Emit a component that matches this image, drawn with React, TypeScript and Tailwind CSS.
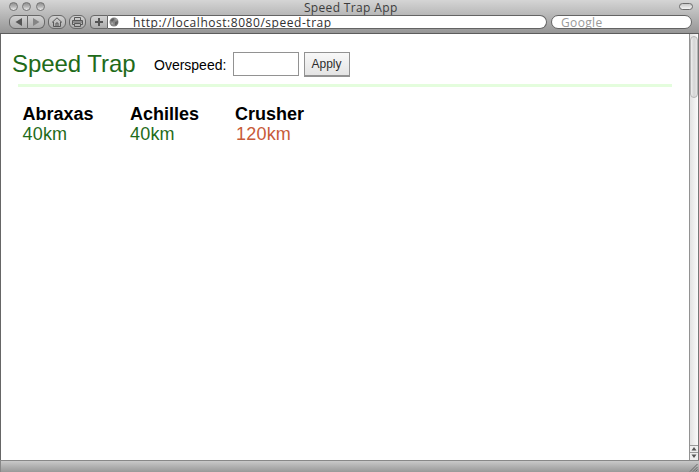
import type { ReactNode } from "react";

const horses = [
  { name: "Abraxas", speed: 40, width: "w-[107.5px]", nudge: "" },
  { name: "Achilles", speed: 40, width: "w-[105px]", nudge: "" },
  { name: "Crusher", speed: 120, width: "w-[90px]", nudge: "pl-px" },
];

function ToolButton({ className, children }: { className: string; children: ReactNode }) {
  return (
    <div
      className={`flex h-[14px] items-center justify-center border border-[#686868] bg-gradient-to-b from-[#d2d2d2] to-[#acacac] ${className}`}
    >
      {children}
    </div>
  );
}

function TrafficLight() {
  return (
    <div className="size-[9px] rounded-full border border-[#737373] bg-gradient-to-b from-[#909090] via-[#b4b4b4] to-[#eeeeee]" />
  );
}

function TitleBar() {
  return (
    <header className="flex h-[34px] flex-col border-b border-[#5c5c5c] bg-gradient-to-b from-[#d5d5d5] to-[#969696] font-['Open_Sans',sans-serif]">
      <div className="flex h-[15px] items-start pr-[6px] pl-[8.5px]">
        <div className="flex w-[80px] gap-[4.5px] pt-[2px]">
          <TrafficLight />
          <TrafficLight />
          <TrafficLight />
        </div>
        <div className="flex-1 text-center text-[12px] leading-[15px] tracking-[0.35px] text-[#3c3c3c]">Speed Trap App</div>
        <div className="flex w-[80px] justify-end pt-[3px]">
          <div className="h-[7px] w-[14px] rounded-full border border-[#6c6c6c] bg-gradient-to-b from-[#c8c8c8] to-[#f4f4f4]" />
        </div>
      </div>
      <div className="flex h-[14px] items-start pl-[9px]">
        <ToolButton className="w-[19px] rounded-l-[6px]">
          <svg width="17" height="12" viewBox="0 0 17 12"><path d="M12 2v8L5.5 6z" fill="#555" /></svg>
        </ToolButton>
        <ToolButton className="w-[17px] rounded-r-[6px] border-l-0">
          <svg width="16" height="12" viewBox="0 0 16 12"><path d="M5 2v8l6.5-4z" fill="#858585" /></svg>
        </ToolButton>
        <ToolButton className="ml-[3px] w-[18px] rounded-[6px]">
          <svg width="16" height="12" viewBox="0 0 16 12" fill="none" stroke="#585858">
            <path d="M3 6.5 8 1.8l5 4.7M4.5 5.8v4.7h7V5.8M7 10.5V7h2v3.5" />
          </svg>
        </ToolButton>
        <ToolButton className="ml-[3px] w-[17px] rounded-[6px]">
          <svg width="15" height="12" viewBox="0 0 15 12" fill="none" stroke="#585858">
            <path d="M4.5 4V1.5h6V4M4.5 8.5h-2v-4h10v4h-2M4.5 7.5h6v3h-6z" />
            <path d="M3 6h9" />
          </svg>
        </ToolButton>
        <ToolButton className="ml-1 w-[18px] rounded-l-[4px]">
          <svg width="16" height="12" viewBox="0 0 16 12"><path d="M7 2h2v3h3v2H9v3H7V7H4V5h3z" fill="#555" /></svg>
        </ToolButton>
        <div className="flex h-[14px] w-[439px] items-start overflow-hidden rounded-r-[7px] border border-l-0 border-[#646464] bg-white pl-[1px]">
          <svg className="mt-px" width="10" height="10" viewBox="0 0 10 10">
            <circle cx="5" cy="5" r="4.5" fill="#858585" />
            <path d="M2 2.5 4.5 1 5 3 3.5 4.5 1.5 4zM6 5l3-1-.5 3L6 8.5z" fill="#606060" />
            <path d="M1.5 6 4 5.5 4.5 8zM6.5 1.5l2 1.5-2 .5z" fill="#aaa" />
          </svg>
          <span className="ml-[14px] text-[12px] leading-[14px] tracking-[0.54px] whitespace-nowrap text-[#303030]">
            http://localhost:8080/speed-trap
          </span>
        </div>
        <div className="ml-[4px] h-[14px] w-[141px] overflow-hidden rounded-full border border-[#646464] bg-white pl-[9px] text-[12px] leading-[14px] tracking-[0.35px] text-[#999]">
          Google
        </div>
      </div>
    </header>
  );
}

function ScrollBar() {
  return (
    <div className="flex w-[10px] flex-col items-stretch border-r border-l border-r-[#777] border-l-[#929292] bg-gradient-to-r from-[#e2e2e2] to-[#fafafa] pt-[2px]">
      <div className="h-[62px] rounded-full border border-[#b4b4b4] bg-gradient-to-r from-[#eeeeee] via-[#d4d4d4] to-[#e6e6e6]" />
      <div className="flex-1" />
      <svg width="8" height="15" viewBox="0 0 8 15">
        <path d="M0 0h8v15H0z" fill="#eee" />
        <path d="M0 .5h8M0 7.5h8" stroke="#999" />
        <path d="M1.5 5.5h5L4 2zM1.5 9.5h5L4 13z" fill="#555" />
      </svg>
    </div>
  );
}

export default function App() {
  return (
    <div className="flex h-[472px] w-[699px] flex-col overflow-hidden bg-white font-['Liberation_Sans',sans-serif]">
      <TitleBar />
      <div className="flex min-h-0 flex-1 border-l border-[#666]">
        <main className="min-w-0 flex-1">
          <div className="flex h-[50px] items-start pl-[11px]">
            <h1 className="w-[142px] pt-[16px] text-[24px] leading-[28px] tracking-[-0.05px] whitespace-nowrap text-[#1f6b1a]">Speed Trap</h1>
            <label className="w-[79px] pt-[23px] text-[14px] leading-4 whitespace-nowrap text-black" htmlFor="overspeed">
              Overspeed:
            </label>
            <input id="overspeed" className="mt-[18px] h-6 w-[66px] border border-[#929292] bg-white" />
            <button className="mt-[18px] ml-[5px] h-[25px] w-[46px] border border-b-2 border-[#929292] bg-gradient-to-b from-[#f8f8f8] to-[#e4e4e4] pr-px text-[12px] leading-[22px] text-[#2c2c2c]">
              Apply
            </button>
          </div>
          <div className="mr-[17px] ml-[17px] h-[3px] bg-[#e4fddd]" />
          <div className="flex pt-[17px] pl-[21.5px] text-[18px] leading-5">
            {horses.map((horse) => (
              <div key={horse.name} className={horse.width}>
                <div className="font-bold text-black">{horse.name}</div>
                <div className={`tracking-[0.2px] ${horse.nudge} ${horse.speed > 100 ? "text-[#c75b39]" : "text-[#1f6b1a]"}`}>
                  {horse.speed}km
                </div>
              </div>
            ))}
          </div>
        </main>
        <ScrollBar />
      </div>
      <footer className="flex h-3 items-end justify-end border-t border-l border-[#888] bg-gradient-to-b from-[#c9c9c9] to-[#999] pr-[1px]">
        <svg width="9" height="9" viewBox="0 0 9 9" stroke="#666">
          <path d="M1 8.5 8.5 1M4 8.5 8.5 4M6.5 8.5l2-2" />
        </svg>
      </footer>
    </div>
  );
}
